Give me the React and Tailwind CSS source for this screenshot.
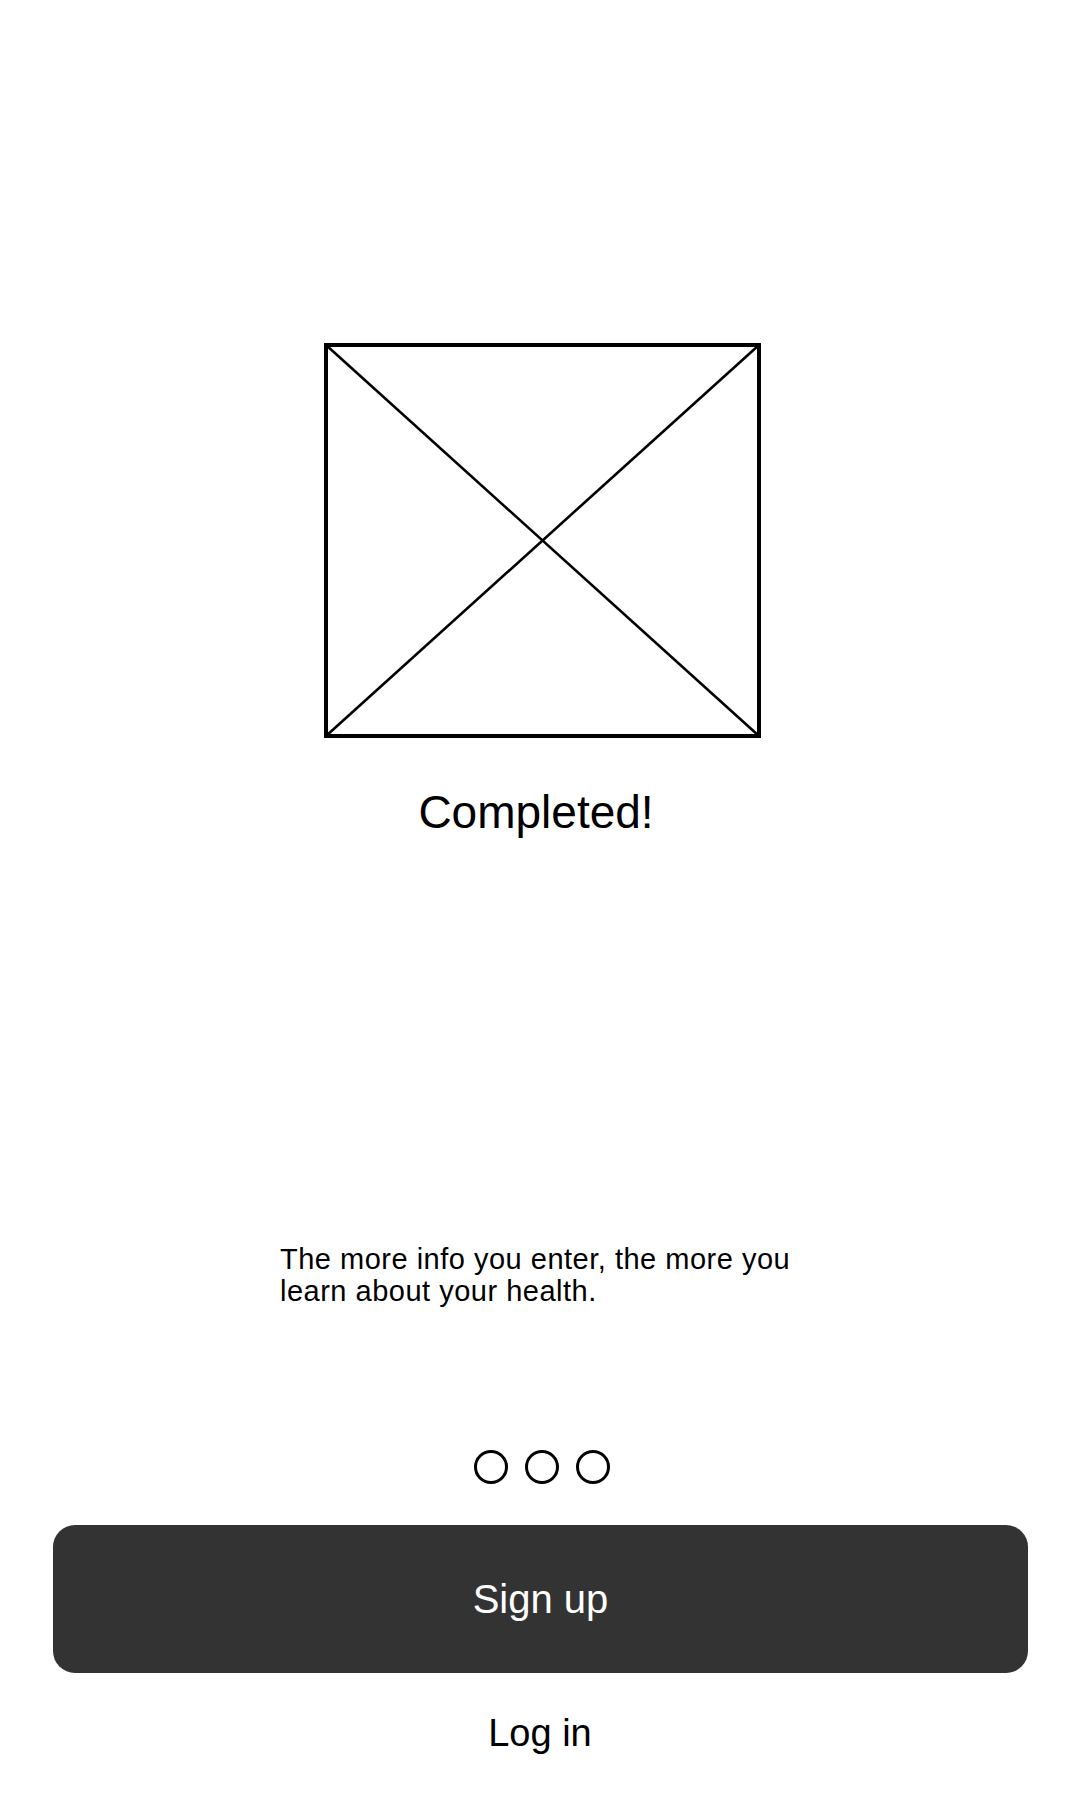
export default function App() {
  return (
    <div
      className="w-[1080px] h-[1800px] bg-white flex flex-col text-black"
      style={{ fontFamily: '"Liberation Sans", Arial, sans-serif' }}
    >
      <svg
        className="ml-[324px] mt-[343px] shrink-0"
        width="437"
        height="395"
        viewBox="0 0 437 395"
      >
        <rect x="2" y="2" width="433" height="391" fill="none" stroke="#000" strokeWidth="4" />
        <line x1="2" y1="2" x2="435" y2="393" stroke="#000" strokeWidth="2.6" />
        <line x1="435" y1="2" x2="2" y2="393" stroke="#000" strokeWidth="2.6" />
      </svg>

      <div className="mt-[51px] text-center text-[46px] leading-[46px] pr-[8px]">Completed!</div>

      <p className="mt-[408px] ml-[280px] w-[540px] text-[29px] leading-[32px] tracking-[0.5px]">
        The more info you enter, the more you learn about your health.
      </p>

      <div className="mt-[143px] flex justify-center gap-[17px] pl-[3px]">
        <div className="w-[34px] h-[34px] rounded-full border-[3px] border-black" />
        <div className="w-[34px] h-[34px] rounded-full border-[3px] border-black" />
        <div className="w-[34px] h-[34px] rounded-full border-[3px] border-black" />
      </div>

      <button className="mt-[41px] ml-[53px] mr-[52px] h-[148px] rounded-[22px] bg-[#333333] text-white text-[40px] flex items-center justify-center">
        Sign up
      </button>

      <div className="mt-[41px] text-center text-[38px] leading-[38px]">Log in</div>
    </div>
  );
}
